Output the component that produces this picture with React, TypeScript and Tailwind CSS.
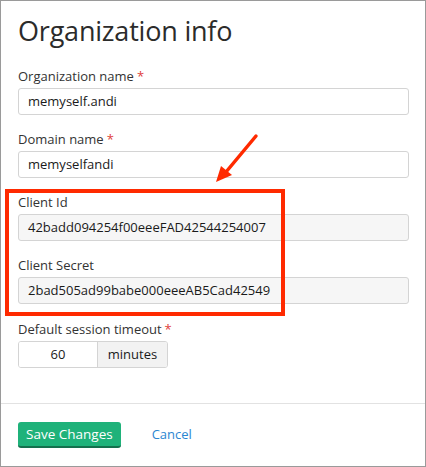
import React from 'react';

const Label: React.FC<{ text: string; required?: boolean }> = ({ text, required }) => (
  <label className="block text-[13px] leading-[16px] text-[#333] mb-[4px]">
    {text}
    {required && <span className="text-[#e0403a] ml-[3px]">*</span>}
  </label>
);

const Field: React.FC<{ value: string; readOnly?: boolean }> = ({ value, readOnly }) => (
  <div
    className={`h-[27px] w-[391px] rounded-[3px] border border-[#d4d4d4] px-[9px] flex items-center text-[13px] text-[#1a1a1a] ${
      readOnly ? 'bg-[#f6f6f6]' : 'bg-white'
    }`}
  >
    {value}
  </div>
);

const App: React.FC = () => {
  return (
    <div
      className="relative w-[426px] h-[467px] bg-white border border-[#9a9a9a] overflow-hidden"
      style={{ fontFamily: '"Open Sans", "DejaVu Sans", sans-serif' }}
    >
      <div className="px-[17px] pt-[12px]">
        <h1 className="text-[27px] leading-[36px] text-[#2b2b2b] font-normal tracking-[-0.2px]">
          Organization info
        </h1>

        <div className="mt-[19px]">
          <Label text="Organization name" required />
          <Field value="memyself.andi" />
        </div>

        <div className="mt-[16px]">
          <Label text="Domain name" required />
          <Field value="memyselfandi" />
        </div>

        <div className="mt-[16px]">
          <Label text="Client Id" />
          <Field value="42badd094254f00eeeFAD42544254007" readOnly />
        </div>

        <div className="mt-[16px]">
          <Label text="Client Secret" />
          <Field value="2bad505ad99babe000eeeAB5Cad42549" readOnly />
        </div>

        <div className="mt-[17px]">
          <Label text="Default session timeout" required />
          <div className="flex h-[27px] w-[150px] rounded-[3px] border border-[#d4d4d4] text-[13px] text-[#1a1a1a] overflow-hidden">
            <div className="w-[78px] flex items-center justify-center bg-white">60</div>
            <div className="flex-1 flex items-center justify-center bg-[#f2f2f2] border-l border-[#d4d4d4]">
              minutes
            </div>
          </div>
        </div>
      </div>

      <div className="mt-[35px] border-t border-[#e2e2e2]" />

      <div className="px-[17px] pt-[18px] flex items-center gap-[31px]">
        <button className="h-[26px] px-[8px] rounded-[3px] bg-[#1fb27a] border-b-2 border-[#14704d] text-white text-[13.5px]">
          Save Changes
        </button>
        <a className="text-[13px] text-[#2b86d1]">Cancel</a>
      </div>

      {/* annotation overlay */}
      <div className="absolute left-[4px] top-[188px] w-[280px] h-[127px] border-[4px] border-[#ff2a00] pointer-events-none" />
      <svg className="absolute left-0 top-0 pointer-events-none" width="426" height="467">
        <line x1="255" y1="135" x2="225" y2="171" stroke="#ff2a00" strokeWidth="3.5" strokeLinecap="round" />
        <polygon points="215,181 220,165 231,174" fill="#ff2a00" />
      </svg>
    </div>
  );
};

export default App;
